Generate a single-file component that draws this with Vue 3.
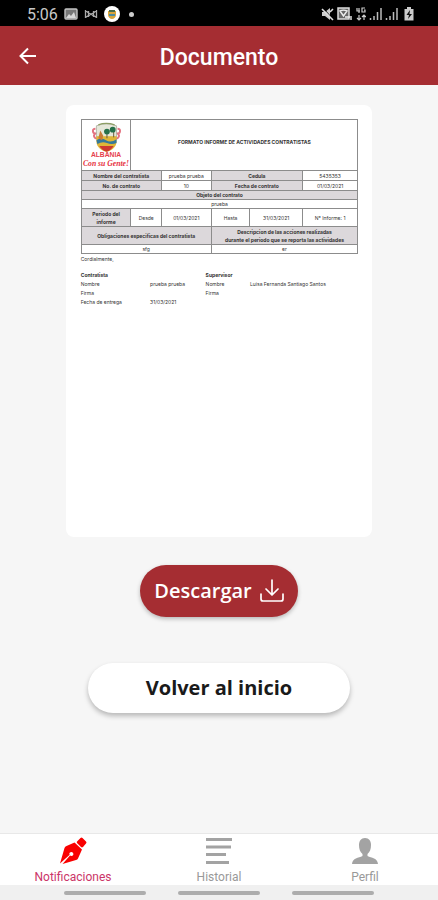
<template>
  <div class="screen">
    <!-- Device status bar -->
    <div class="status-bar">
      <div class="status-group">
        <span class="clock">5:06</span>
        <svg viewBox="0 0 14 12" width="14" height="12">
          <rect x="1" y="1" width="12" height="10" rx="1" fill="#777" stroke="#c4c4c4" stroke-width="1.4" />
          <path d="M2 10l3-4 2 2 3-4 2 6z" fill="#d8d8d8" />
        </svg>
        <svg viewBox="0 0 14 12" width="14" height="12">
          <path d="M1.500 2v8M12.500 2v8M4.500 3v6M9.500 3v6M1.500 2.500l3 2.500 2.500 1 2.500-1 3-2.500M1.500 9.500l3-2M12.500 9.500l-3-2M4.500 8L7 6l2.500 2" fill="none" stroke="#aaa" stroke-width="1.3" />
        </svg>
        <svg viewBox="0 0 16 16" width="16" height="16">
          <circle cx="8" cy="8" r="8" fill="#fff" />
          <path d="M4 5h8v4c0 2-2 4-4 4S4 11 4 9z" fill="#d8a43a" />
          <path d="M5 4h6v2H5z" fill="#496b4b" />
          <path d="M5 8h6v2H5z" fill="#4b8aa0" />
        </svg>
        <span class="dot"></span>
      </div>
      <div class="status-group icons">
        <svg viewBox="0 0 14 14" width="14" height="14">
          <path d="M2 5h3l5-4v12L5 9H2z" fill="#ccc" />
          <path d="M3 1l10 11" stroke="#000" stroke-width="1" />
          <path d="M2 2l11 11M10 5l3-3" stroke="#ddd" stroke-width="1.6" />
        </svg>
        <svg viewBox="0 0 16 14" width="16" height="14">
          <rect x="1" y="1" width="11" height="11" fill="#666" stroke="#ddd" stroke-width="1.5" />
          <path d="M3 4c2-1 5-1 7 0L6.500 9zM8 10h5M14 9v4" fill="none" stroke="#eee" stroke-width="1.4" />
        </svg>
        <svg viewBox="0 0 10 14" width="10" height="14">
          <path d="M1 1v3h3M3 1v5M9 1H6v4h3V3H8M3 8v5M1 11l2 2 2-2M8 13V8M6 10l2-2 2 2" fill="none" stroke="#ccc" stroke-width="1.200" />
        </svg>
        <svg v-for="n in 2" :key="n" viewBox="0 0 13 14" width="13" height="14">
          <path d="M1.500 11v2M5 9v4M8.500 5v8M12 1v12" stroke="#bbb" stroke-width="1.500" />
        </svg>
        <svg class="battery" viewBox="0 0 10 14" width="10" height="14">
          <path d="M3 0h4v2h2.500v11.500H.5V2H3z" fill="#ccc" />
          <path d="M6 3L2.500 8H5l-1 4 4-5H5.500z" fill="#111" />
        </svg>
      </div>
    </div>

    <header class="app-header">
      <button class="back-btn" type="button" aria-label="Volver">
        <svg viewBox="0 0 18 18" width="18" height="18">
          <path d="M17 9H2M9 1.500L1.500 9 9 16.500" />
        </svg>
      </button>
      <h1>Documento</h1>
    </header>

    <main class="content">
      <article class="document">
        <table class="report">
          <colgroup>
            <col v-for="(w, i) in columns" :key="i" :style="{ width: w + '%' }" />
          </colgroup>
          <tbody>
            <tr class="row-title">
              <td>
                <svg class="crest" viewBox="0 0 50 50" width="48" height="48">
                  <path d="M14 8c-4 0-3 5 0 5-3 2-1 6 2 5M37 8c4 0 3 5 0 5 3 2 1 6-2 5" fill="none" stroke="#e47380" stroke-width="2" />
                  <path d="M15 5q10-4 21 0v12H15z" fill="#e5e7d9" stroke="#9aa08c" stroke-width=".7" />
                  <path d="M15 16h21v5c0 6-5 10-10.500 11C20 31 15 27 15 21z" fill="#dfb637" />
                  <path d="M15 20q5-3 10 0t11-1v4q-5 2-10 0t-10 1z" fill="#34799b" />
                  <path d="M18 26h15q-3 5-7.500 6Q21 31 18 26z" fill="#ce3930" />
                  <path d="M17 18l2-8 3 5-1 5z" fill="#c77b35" />
                  <path d="M26 18V11M33 17V9" stroke="#68583a" />
                  <circle cx="26" cy="11" r="3" fill="#26704a" />
                  <circle cx="32" cy="9" r="3" fill="#26704a" />
                  <path d="M17 4q8-3 17 0" fill="none" stroke="#8e9e64" stroke-width="1.500" />
                  <text class="crest-name" x="25" y="38" text-anchor="middle">ALBANIA</text>
                  <text class="crest-motto" x="25" y="47" text-anchor="middle">Con su Gente!</text>
                </svg>
              </td>
              <th colspan="5">FORMATO INFORME DE ACTIVIDADES CONTRATISTAS</th>
            </tr>
            <tr class="row-label">
              <th class="shade" colspan="2">Nombre del contratista</th>
              <td>prueba prueba</td>
              <th class="shade" colspan="2">Cedula</th>
              <td>5435353</td>
            </tr>
            <tr class="row-label">
              <th class="shade" colspan="2">No. de contrato</th>
              <td>10</td>
              <th class="shade" colspan="2">Fecha de contrato</th>
              <td>01/03/2021</td>
            </tr>
            <tr>
              <th class="shade" colspan="6">Objeto del contrato</th>
            </tr>
            <tr>
              <td colspan="6">prueba</td>
            </tr>
            <tr class="row-tall">
              <th class="shade">Periodo del<br />informe</th>
              <td>Desde</td>
              <td>01/03/2021</td>
              <td>Hasta</td>
              <td>31/03/2021</td>
              <td>N° Informe: 1</td>
            </tr>
            <tr class="row-tall">
              <th class="shade" colspan="3">Obligaciones especificas del contratista</th>
              <th class="shade" colspan="3">
                Descripcion de las acciones realizadas<br />durante el periodo que se reporta las actividades
              </th>
            </tr>
            <tr>
              <td colspan="3">sfg</td>
              <td colspan="3">er</td>
            </tr>
          </tbody>
        </table>

        <p class="closing">Cordialmente,</p>

        <table class="signatures">
          <colgroup>
            <col v-for="(w, i) in signatureColumns" :key="i" :style="{ width: w + '%' }" />
          </colgroup>
          <tbody>
            <tr>
              <th colspan="2">Contratista</th>
              <th colspan="2">Supervisor</th>
            </tr>
            <tr v-for="row in signatures" :key="row[0]">
              <td v-for="(cell, i) in row" :key="i">{{ cell }}</td>
            </tr>
          </tbody>
        </table>
      </article>

      <button class="download-btn" type="button">
        Descargar
        <svg viewBox="0 0 24 24" width="24" height="24">
          <path d="M12 1v14M6 10l6 6 6-6M1 15v5q0 2 2 2h18q2 0 2-2v-5" />
        </svg>
      </button>
      <button class="home-btn" type="button">Volver al inicio</button>
    </main>

    <nav class="tab-bar">
      <a href="#notificaciones" class="tab active">
        <svg viewBox="0 0 28 28" width="28" height="28">
          <path d="M18.500 4l3-3q1-.8 2 0l3.500 3.500q1 1 0 2L24 10q-1 .8-2 0l-4-4q-.8-1 .5-2z" />
          <path d="M15.500 5.500l7.500 7-4 9q-.5 1-2 1.500L3.500 27l7.500-8.500q2 1 3.200-.5c1-2-1.500-4-3.200-2.500-.8.800-.8 1.600-.3 2.300L1 26.500 5.500 11q.5-1.500 2-2z" />
        </svg>
        <span>Notificaciones</span>
      </a>
      <a href="#historial" class="tab">
        <svg viewBox="0 0 28 28" width="28" height="28">
          <path d="M1 1h26v3H1zM1 8.500h25v3H1zM1 16h20v3H1zM1 24h23v3H1z" />
        </svg>
        <span>Historial</span>
      </a>
      <a href="#perfil" class="tab">
        <svg viewBox="0 0 28 28" width="28" height="28">
          <path d="M14 1c4 0 6 3 6 7 0 4-1 7-3.500 9v2c4 2 10 2 10.500 8H1c.5-6 6.500-6 10.500-8v-2C9 15 8 12 8 8c0-4 2-7 6-7z" />
        </svg>
        <span>Perfil</span>
      </a>
    </nav>
    <div class="gesture-bar">
      <span v-for="n in 3" :key="n"></span>
    </div>
  </div>
</template>

<script setup>
// Column widths of the two tables, in percent
const columns = [18, 11, 18, 14, 19, 20]
const signatureColumns = [25, 20, 16, 39]

const signatures = [
  ['Nombre', 'prueba prueba', 'Nombre', 'Luisa Fernanda Santiago Santos'],
  ['Firma', '', 'Firma', ''],
  ['Fecha de entrega', '31/03/2021', '', '']
]
</script>

<style>
body {
  margin: 0;
  background: #f6f6f6;
}
</style>

<style scoped>
.screen {
  display: flex;
  flex-direction: column;
  min-height: 100vh;
  background: #f6f6f6;
  font-family: Roboto, sans-serif;
}

.screen * {
  box-sizing: border-box;
}

svg {
  display: block;
  flex-shrink: 0;
}

.status-bar {
  display: flex;
  align-items: center;
  justify-content: space-between;
  height: 26px;
  padding: 2px 24px 0 27px;
  background: #000;
}

.status-group {
  display: flex;
  align-items: center;
  gap: 6px;
}

.status-group.icons {
  gap: 3px;
}

.battery {
  margin-left: 3px;
}

.clock {
  color: #c8c8c8;
  font-size: 16px;
}

.dot {
  width: 5px;
  height: 5px;
  margin-left: 3px;
  border-radius: 50%;
  background: #ccc;
}

.app-header {
  display: grid;
  grid-template-columns: 56px 1fr 56px;
  align-items: center;
  height: 59px;
  background: #a52d32;
}

.app-header h1 {
  margin: 0;
  padding-top: 4px;
  color: #fff;
  font-size: 23px;
  font-weight: 500;
  line-height: 28px;
  text-align: center;
}

.back-btn {
  width: 56px;
  height: 56px;
  padding: 0 19px;
  border: none;
  background: none;
  cursor: pointer;
}

.back-btn path {
  fill: none;
  stroke: #fff;
  stroke-width: 2;
}

.content {
  display: flex;
  flex: 1;
  flex-direction: column;
  align-items: center;
  padding: 20px 0;
}

/* Document preview */
.document {
  width: 70%;
  aspect-ratio: 306 / 431;
  padding: 14px 14px 14px 15px;
  border-radius: 8px;
  background: #fff;
  color: #333;
  font-family: Inter, "Liberation Sans", sans-serif;
  font-size: 5px;
  line-height: 9px;
}

.report,
.signatures {
  width: 100%;
  table-layout: fixed;
  border-collapse: collapse;
}

.report th,
.report td {
  height: 9px;
  padding: 0;
  border: 1px solid #8c8c8c;
  line-height: 8px;
  text-align: center;
  vertical-align: middle;
}

.report .shade {
  background: #dcd8db;
}

.report .row-title > * {
  height: 51px;
}

.report .row-title th {
  padding-bottom: 6px;
}

.report .row-label > * {
  height: 10px;
}

.report .row-tall > * {
  height: 18px;
}

.crest {
  margin: 0 auto;
}

.crest-name {
  fill: #e6404c;
  font-family: "Liberation Sans", Arial, sans-serif;
  font-size: 7px;
  font-weight: 700;
}

.crest-motto {
  fill: #e6303c;
  font-family: "Liberation Serif", serif;
  font-size: 8px;
  font-style: italic;
  font-weight: 700;
}

.closing {
  margin: 1px 0 7px;
}

.signatures th,
.signatures td {
  height: 9px;
  padding: 0;
  text-align: left;
  white-space: nowrap;
}

/* Buttons */
.download-btn,
.home-btn {
  display: flex;
  align-items: center;
  justify-content: center;
  border: none;
  border-radius: 26px;
  font-family: "Open Sans", sans-serif;
  font-size: 20px;
  cursor: pointer;
}

.download-btn {
  gap: 8px;
  height: 52px;
  margin-top: 28px;
  padding: 0 14px;
  background: #a52d32;
  box-shadow: 0 2px 4px rgba(0, 0, 0, 0.25);
  color: #fff;
  font-weight: 600;
}

.download-btn path {
  fill: none;
  stroke: #fff;
  stroke-width: 1.7;
  stroke-linecap: round;
  stroke-linejoin: round;
}

.home-btn {
  width: 60%;
  height: 50px;
  margin-top: 46px;
  background: #fff;
  box-shadow: 0 3px 5px rgba(0, 0, 0, 0.25);
  color: #1a1a1a;
  font-weight: 700;
}

/* Bottom navigation */
.tab-bar {
  display: grid;
  grid-template-columns: repeat(3, 1fr);
  height: 52px;
  border-top: 1px solid #e8e8e8;
  background: #fff;
}

.tab {
  display: flex;
  flex-direction: column;
  align-items: center;
  gap: 4px;
  padding-top: 3px;
  color: #999;
  font-size: 12px;
  line-height: 16px;
  text-decoration: none;
}

.tab svg {
  fill: #a3a3a3;
}

.tab.active {
  color: #cb3568;
}

.tab.active svg {
  fill: #f90000;
}

.gesture-bar {
  display: flex;
  align-items: center;
  justify-content: center;
  gap: 32px;
  height: 15px;
  background: #f0f0f0;
}

.gesture-bar span {
  width: 82px;
  height: 4px;
  border-radius: 2px;
  background: #adadad;
}
</style>
